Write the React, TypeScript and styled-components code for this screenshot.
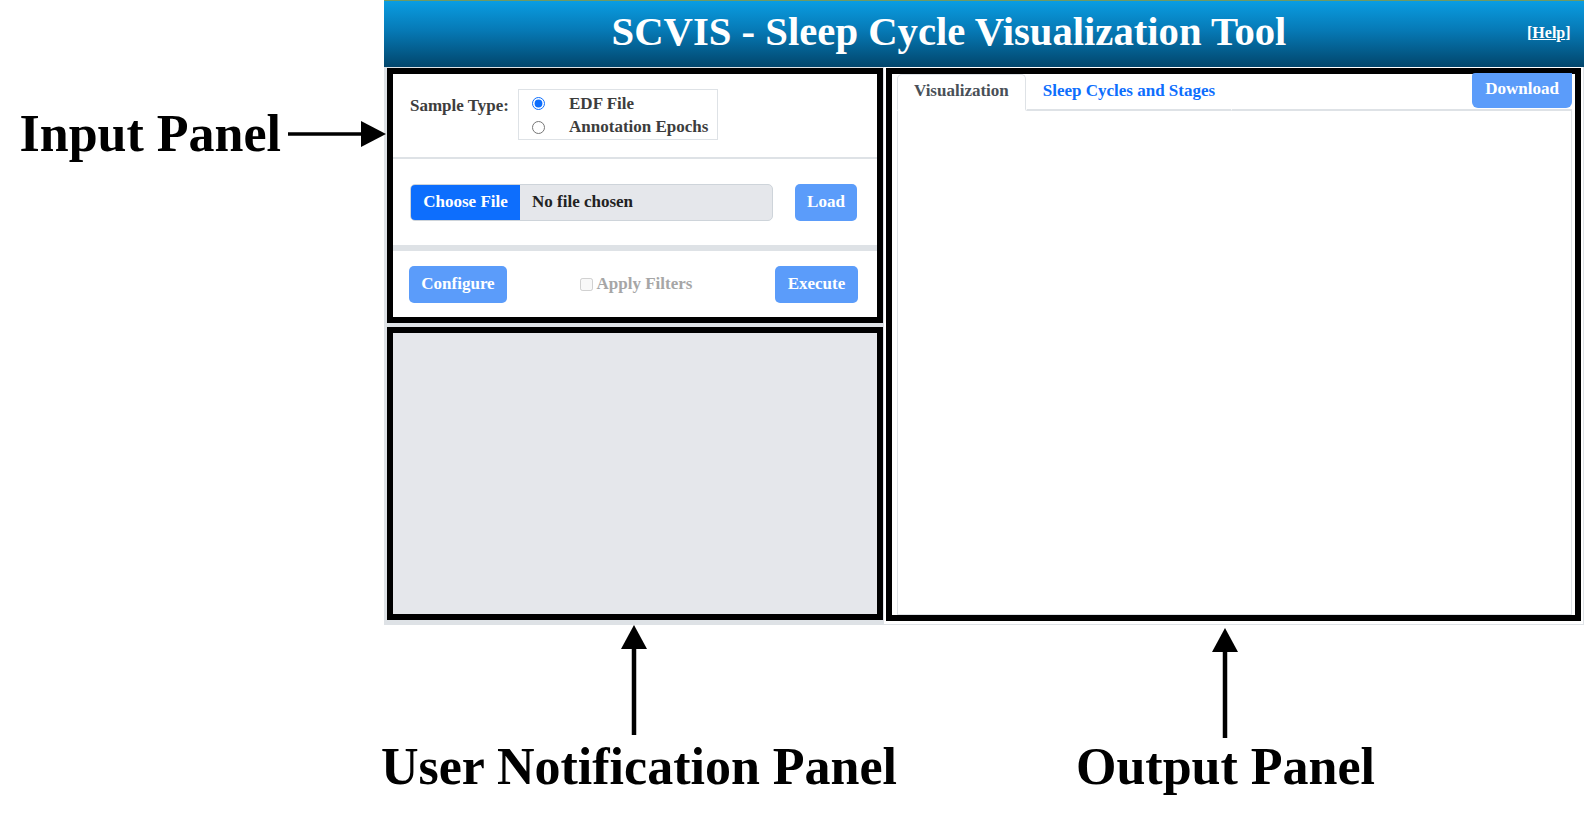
import React from 'react';
import styled, { createGlobalStyle } from 'styled-components';

const GlobalStyle = createGlobalStyle`
  html, body {
    margin: 0;
    padding: 0;
    background: #fff;
  }
  body {
    font-family: "Liberation Serif", "Times New Roman", serif;
  }
  * {
    box-sizing: border-box;
  }
`;

const RightArrow = () => (
  <svg width="98" height="26" viewBox="0 0 98 26">
    <line x1="0" y1="13" x2="76" y2="13" stroke="#000" strokeWidth="3.5" />
    <polygon points="98,13 73,0 73,26" fill="#000" />
  </svg>
);

const UpArrow = () => (
  <svg width="26" height="110" viewBox="0 0 26 110">
    <line x1="13" y1="20" x2="13" y2="110" stroke="#000" strokeWidth="4.5" />
    <polygon points="13,0 0,24 26,24" fill="#000" />
  </svg>
);

function App() {
  return (
    <>
      <GlobalStyle />
      <Page>
        <SideNote>
          <NoteText>Input Panel</NoteText>
          <RightArrow />
        </SideNote>

        <Shell>
          <Header>
            <Title>SCVIS - Sleep Cycle Visualization Tool</Title>
            <Help>[<u>Help</u>]</Help>
          </Header>

          <Body>
            <LeftCol>
              <InputBox>
                <SampleRow>
                  <FieldLabel>Sample Type:</FieldLabel>
                  <RadioBox>
                    <RadioRow>
                      <input type="radio" name="sample" defaultChecked />
                      <span>EDF File</span>
                    </RadioRow>
                    <RadioRow>
                      <input type="radio" name="sample" />
                      <span>Annotation Epochs</span>
                    </RadioRow>
                  </RadioBox>
                </SampleRow>
                <Divider $size={2} />
                <FileRow>
                  <FileControl>
                    <ChooseButton>Choose File</ChooseButton>
                    <FileName>No file chosen</FileName>
                  </FileControl>
                  <Button $width={62}>Load</Button>
                </FileRow>
                <Divider $size={6} />
                <ActionRow>
                  <Button $width={98}>Configure</Button>
                  <FilterCheck>
                    <input type="checkbox" disabled />
                    <span>Apply Filters</span>
                  </FilterCheck>
                  <Button $width={83}>Execute</Button>
                </ActionRow>
              </InputBox>
              <NotificationBox />
            </LeftCol>

            <RightCol>
              <OutputBox>
                <TabBar>
                  <Tab $active>Visualization</Tab>
                  <Tab>Sleep Cycles and Stages</Tab>
                  <DownloadButton>Download</DownloadButton>
                </TabBar>
                <TabContent />
              </OutputBox>
            </RightCol>
          </Body>
        </Shell>

        <BottomNotes>
          <NoteStack $gap={6} $shift={0} $textShift={10}>
            <UpArrow />
            <NoteText>User Notification Panel</NoteText>
          </NoteStack>
          <NoteStack $gap={3} $shift={19} $textShift={2} style={{ paddingTop: 3 }}>
            <UpArrow />
            <NoteText>Output Panel</NoteText>
          </NoteStack>
        </BottomNotes>
      </Page>
    </>
  );
}

const Page = styled.div`
  width: 1584px;
  height: 825px;
  display: grid;
  grid-template-columns: 384px 1200px;
  grid-template-rows: 625px 200px;
  overflow: hidden;
  background: #fff;
`;

const NoteText = styled.div`
  font-size: 52px;
  line-height: 1;
  font-weight: 700;
  color: #000;
  white-space: nowrap;
`;

const SideNote = styled.div`
  position: relative;
  z-index: 1;
  display: flex;
  align-items: center;
  align-self: start;
  justify-content: flex-end;
  gap: 7px;
  margin: 108px -2px 0 0;
`;

const Shell = styled.div`
  display: flex;
  flex-direction: column;
  min-height: 0;
`;

const Header = styled.header`
  height: 67px;
  display: flex;
  align-items: center;
  border-top: 1px solid #6f9a63;
  background: linear-gradient(180deg, #0a9de2 0%, #0679b5 45%, #02466c 100%);
  color: #fff;
`;

const Title = styled.h1`
  flex: 1;
  margin: 0;
  padding-bottom: 4px;
  text-align: center;
  font-size: 40.7px;
  font-weight: 700;
  line-height: 1;
`;

const Help = styled.a`
  width: 70px;
  padding-left: 13px;
  padding-bottom: 3px;
  font-size: 16px;
  font-weight: 700;
  color: #fff;
  cursor: pointer;
`;

const Body = styled.div`
  flex: 1;
  display: grid;
  grid-template-columns: 500px 700px;
  min-height: 0;
`;

const LeftCol = styled.div`
  display: flex;
  flex-direction: column;
  gap: 4px;
  padding: 1px 1px 5px 3px;
  background: #dee2e6;
`;

const InputBox = styled.section`
  height: 255px;
  display: flex;
  flex-direction: column;
  border: 6px solid #000;
  background: #fff;
`;

const SampleRow = styled.div`
  height: 83px;
  display: flex;
  align-items: flex-start;
  padding: 15px 0 0 17px;
`;

const FieldLabel = styled.span`
  margin: 7px 9px 0 0;
  font-size: 17px;
  line-height: 20px;
  font-weight: 700;
  color: #3d3d3d;
`;

const RadioBox = styled.div`
  width: 200px;
  height: 51px;
  display: flex;
  flex-direction: column;
  padding: 2px 0 0 13px;
  border: 1px solid #dee2e6;
`;

const RadioRow = styled.label`
  height: 24px;
  display: flex;
  align-items: center;
  font-size: 17px;
  font-weight: 700;
  color: #3d3d3d;

  input {
    width: 13px;
    height: 13px;
    margin: 0 24px 0 0;
    accent-color: #0d6efd;
  }
`;

const Divider = styled.div<{ $size: number }>`
  height: ${p => p.$size}px;
  background: #dee2e6;
`;

const FileRow = styled.div`
  height: 86px;
  display: flex;
  align-items: center;
  justify-content: space-between;
  padding: 0 20px 0 17px;
`;

const FileControl = styled.div`
  width: 363px;
  height: 37px;
  display: flex;
  border: 1px solid #ced4da;
  border-radius: 5px;
  overflow: hidden;
  background: #e5e7eb;
`;

const ChooseButton = styled.span`
  width: 109px;
  display: flex;
  align-items: center;
  justify-content: center;
  background: #0d6efd;
  color: #fff;
  font-size: 17px;
  font-weight: 700;
`;

const FileName = styled.span`
  display: flex;
  align-items: center;
  padding-left: 12px;
  font-size: 17px;
  font-weight: 700;
  color: #222;
`;

const Button = styled.button<{ $width: number }>`
  width: ${p => p.$width}px;
  height: 37px;
  padding: 0;
  border: none;
  border-radius: 5px;
  background: #5b9cfa;
  color: #fff;
  font-family: inherit;
  font-size: 17px;
  font-weight: 700;
  cursor: pointer;
`;

const ActionRow = styled.div`
  flex: 1;
  display: flex;
  align-items: center;
  justify-content: space-between;
  padding: 0 19px 0 16px;
`;

const FilterCheck = styled.label`
  display: flex;
  align-items: center;
  margin-right: 10px;
  font-size: 17px;
  font-weight: 700;
  color: #a6a6a6;

  input {
    width: 13px;
    height: 13px;
    margin: 0 4px 0 0;
  }
`;

const NotificationBox = styled.section`
  flex: 1;
  border: 6px solid #000;
  background: #e5e7eb;
`;

const RightCol = styled.div`
  display: flex;
  padding: 1px 2px 3px 2px;
  border-right: 1px solid #dee2e6;
  border-bottom: 1px solid #dee2e6;
`;

const OutputBox = styled.section`
  flex: 1;
  display: flex;
  flex-direction: column;
  padding: 0 3px 0 5px;
  border: 6px solid #000;
  background: #fff;
`;

const TabBar = styled.nav`
  height: 37px;
  display: flex;
  align-items: flex-end;
  border-bottom: 2px solid #dee2e6;
`;

const Tab = styled.div<{ $active?: boolean }>`
  height: 37px;
  display: flex;
  align-items: center;
  padding: 0 16px 3px;
  margin-bottom: -2px;
  font-size: 17px;
  font-weight: 700;
  color: ${p => (p.$active ? '#495057' : '#0d6efd')};
  background: #fff;
  border: 1px solid ${p => (p.$active ? '#dee2e6' : 'transparent')};
  border-bottom: 2px solid ${p => (p.$active ? '#fff' : '#dee2e6')};
  border-radius: 5px 5px 0 0;
`;

const DownloadButton = styled.button`
  align-self: flex-start;
  height: 35px;
  margin: -1px 0 0 auto;
  padding: 0 13px 4px;
  border: none;
  border-radius: 3px 0 6px 6px;
  background: #5b9cfa;
  color: #fff;
  font-family: inherit;
  font-size: 17px;
  font-weight: 700;
  cursor: pointer;
`;

const TabContent = styled.div`
  flex: 1;
  border: 1px solid #dee2e6;
  border-top: none;
`;

const BottomNotes = styled.div`
  grid-column: 2;
  display: grid;
  grid-template-columns: 500px 700px;
`;

const NoteStack = styled.div<{ $gap: number; $shift: number; $textShift: number }>`
  display: flex;
  flex-direction: column;
  align-items: center;
  gap: ${p => p.$gap}px;
  padding-right: ${p => p.$shift}px;

  ${NoteText} {
    margin-left: ${p => p.$textShift}px;
  }
`;

export default App;
